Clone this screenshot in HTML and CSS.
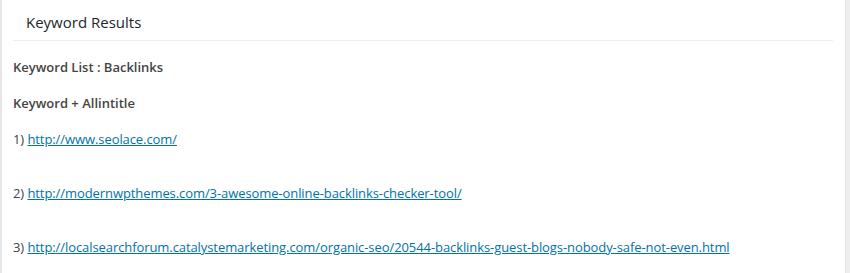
FILE: index.html
```html
<!DOCTYPE html>
<html>
<head>
<meta charset="utf-8">
<link rel="stylesheet" href="styles.css">
</head>
<body>
<div class="page">
  <div class="panel">
    <h2 class="panel-title">Keyword Results</h2>
    <div class="panel-body">
      <p class="label">Keyword List : Backlinks</p>
      <p class="label">Keyword + Allintitle</p>
      <p class="result">1) <a href="#">http://www.seolace.com/</a></p>
      <p class="result spaced">2) <a href="#">http://modernwpthemes.com/3-awesome-online-backlinks-checker-tool/</a></p>
      <p class="result spaced">3) <a href="#">http://localsearchforum.catalystemarketing.com/organic-seo/20544-backlinks-guest-blogs-nobody-safe-not-even.html</a></p>
    </div>
  </div>
  <div class="scroll-strip"></div>
</div>
</body>
</html>
```
FILE: styles.css
```css
html, body {
  margin: 0;
  padding: 0;
  background: #ffffff;
}
.page {
  display: flex;
  height: 273px;
  font-family: "Open Sans", "Noto Sans", sans-serif;
  color: #444444;
}
.panel {
  flex: 1;
  border-left: 2px solid #e5e5e5;
  padding: 0 12px 0 11px;
  overflow: hidden;
}
.panel-title {
  margin: 0;
  padding: 12px 0 8px 13px;
  font-size: 15px;
  font-weight: 400;
  line-height: 20px;
  color: #23282d;
  border-bottom: 1px solid #eeeeee;
}
.panel-body {
  padding-top: 17px;
}
.label {
  margin: 0 0 17px;
  font-size: 13px;
  font-weight: 600;
  line-height: 19px;
  color: #444444;
}
.result {
  margin: 0;
  font-size: 13px;
  line-height: 19px;
  letter-spacing: -0.08px;
  color: #444444;
}
.result.spaced {
  margin-top: 35px;
}
.result a {
  color: #0073aa;
  text-decoration: underline;
}
.scroll-strip {
  width: 4px;
  background: #eeeeee;
  border-left: 1px solid #e2e2e2;
}
```
